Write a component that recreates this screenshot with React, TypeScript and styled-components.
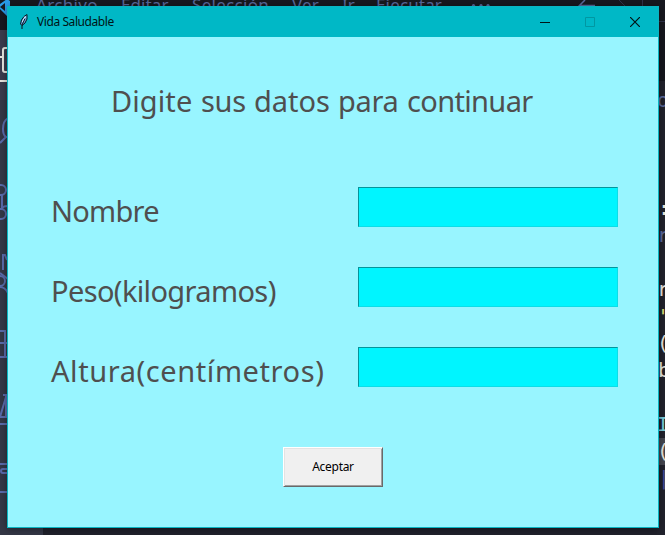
import React from "react";
import styled, { createGlobalStyle } from "styled-components";

const GlobalStyle = createGlobalStyle`
  * { box-sizing: border-box; }
  body { margin: 0; overflow: hidden; background: #20212b; }
`;

const Desktop = styled.main`
  position: relative;
  width: 665px;
  height: 535px;
  overflow: hidden;
  display: grid;
  grid-template: 30px 1fr / 43px 1fr 8px;
  background: #20212b;
  font-family: "Noto Sans", sans-serif;
`;

const MenuBar = styled.header`
  grid-column: 1 / -1;
  display: flex;
  background: #17181f;
  color: #59689b;
  height: 30px;
`;

const MenuItem = styled.span<{ $width: number; $spacing: number }>`
  flex: none;
  width: ${(p) => p.$width}px;
  margin-top: -7px;
  font-size: 17px;
  line-height: 24px;
  letter-spacing: ${(p) => p.$spacing}px;
  white-space: nowrap;
`;

const MenuLogo = styled.svg`
  flex: none;
  width: 12px;
  height: 18px;
  margin-right: 24px;
`;

const NavIcons = styled.svg<{ $width: number }>`
  flex: none;
  width: ${(p) => p.$width}px;
  height: 30px;
`;

const ActivityBar = styled.aside`
  background: #343746;
  svg { display: block; }
`;

const CodeStrip = styled.pre`
  grid-column: 3;
  margin: 0;
  padding-top: 6px;
  border-top: 51px solid #15161d;
  height: 505px;
  background: #21222c;
  font: 20px/27px "DejaVu Sans Mono", monospace;
  color: #e8e8e2;
  overflow: hidden;
`;

const CodeLine = styled.span<{ $color?: string; $indent?: number; $active?: boolean }>`
  display: block;
  height: 27px;
  padding-left: ${(p) => p.$indent ?? 0}px;
  color: ${(p) => p.$color ?? "#e8e8e2"};
  background: ${(p) => (p.$active ? "#44464f" : "transparent")};
`;

const Dialog = styled.section`
  position: absolute;
  left: 7px;
  top: 6px;
  width: 652px;
  height: 522px;
  display: flex;
  flex-direction: column;
  border: 1px solid #0ab4c1;
  background: #98f5ff;
  box-shadow: 0 1px 7px rgba(0, 0, 0, 0.4);
`;

const TitleBar = styled.header`
  flex: none;
  display: flex;
  align-items: center;
  height: 30px;
  padding: 0 1px 0 10px;
  background: #00b8c6;
`;

const WindowTitle = styled.h1`
  flex: 1;
  margin: 0 0 0 7px;
  font: 400 12px/16px "Noto Sans", sans-serif;
  letter-spacing: -0.42px;
  color: #001416;
`;

const CaptionButton = styled.button`
  width: 45px;
  height: 30px;
  padding: 0;
  border: 0;
  background: transparent;
  display: grid;
  place-items: center;

  svg { display: block; }
`;

const Form = styled.form`
  display: flex;
  flex-direction: column;
  height: 490px;
`;

const Heading = styled.h2`
  display: flex;
  margin: 42px 0 0 103px;
  height: 44px;
  font: 400 29px/44px "Noto Sans", sans-serif;
  color: #4f4f4f;
`;

const Word = styled.span<{ $width: number; $spacing: number }>`
  flex: none;
  width: ${(p) => p.$width}px;
  letter-spacing: ${(p) => p.$spacing}px;
  white-space: nowrap;
`;

const Fields = styled.div`
  display: grid;
  gap: 40px;
  margin-top: 64px;
  padding: 0 40px 0 43px;
`;

const Field = styled.label`
  display: grid;
  grid-template-columns: 307px 260px;
  height: 40px;
  font: 400 29px/44px "Noto Sans", sans-serif;
  color: #4f4f4f;
`;

const FieldName = styled.span<{ $spacing: number }>`
  padding-top: 2px;
  letter-spacing: ${(p) => p.$spacing}px;
  white-space: nowrap;
`;

const Input = styled.input`
  width: 260px;
  height: 40px;
  border: 1px solid;
  border-color: #06949b #0ddde6 #0ddde6 #06949b;
  border-radius: 0;
  background: #00f5ff;
  outline: none;
`;

const Submit = styled.button`
  width: 100px;
  height: 40px;
  margin: 60px 0 0 275px;
  padding: 0;
  border: 1px solid;
  border-color: #fff #696969 #696969 #fff;
  box-shadow: inset 1px 1px #e3e3e3, inset -1px -1px #a0a0a0;
  background: #f0f0f0;
  color: #000;
  font: 400 12px/16px "Noto Sans", sans-serif;
  letter-spacing: -0.3px;
`;

const menu: [string, number, number][] = [
  ["Archivo", 85, 0.35],
  ["Editar", 71, 0.1],
  ["Selección", 100, 0.3],
  ["Ver", 50, 0.2],
  ["Ir", 34, 0],
  ["Ejecutar", 94, 0.15],
];

const words: [string, number, number][] = [
  ["Digite", 90, 0.1],
  ["sus", 53, -0.3],
  ["datos", 84, 0],
  ["para", 69, -0.3],
  ["continuar", 126, -0.65],
];

const fields: [string, number][] = [
  ["Nombre", -0.75],
  ["Peso(kilogramos)", -0.63],
  ["Altura(centímetros)", 0.58],
];

const code: { text: string; color?: string; indent?: number; active?: boolean }[] = [
  { text: "ol", color: "#59689b" },
  { text: "" },
  { text: "" },
  { text: "" },
  { text: ":", indent: 1 },
  { text: "r", color: "#59689b" },
  { text: "" },
  { text: "r" },
  { text: "'", color: "#dce07a" },
  { text: "(" },
  { text: "b", indent: 1 },
  { text: "" },
  { text: "I", color: "#78cbdc" },
  { text: "(", active: true },
  { text: "|", color: "#49509c", indent: 1 },
];

function Feather() {
  return (
    <svg width="12" height="18" viewBox="0 0 12 18" fill="none">
      <path d="M9 1.500 6 3.500 3.500 7 2.500 11l1.500 1.500 3-2.500 2-4z" fill="#6ea4e4" stroke="#061a20" />
      <path d="M7.500 3.500 4.500 9" stroke="#d7f2ff" strokeWidth="1.300" />
      <path d="M7 5.500 4 12v4" stroke="#08131b" />
    </svg>
  );
}

function ActivityIcons() {
  return (
    <svg width="43" height="505" viewBox="0 30 43 505" fill="none" stroke="#596aaa" strokeWidth="2">
      <rect y="30" width="43" height="70" fill="#3b3b4d" stroke="none" />
      <path d="M8 48H5q-2 0-2 2v20q0 2 2 2h3M0 57h3M0 81h8" stroke="#e7e5df" />
      <path d="M8 118q-5 3-5 11 0 6 3 8l-6 6M5 137h3" />
      <circle cx="1" cy="190" r="5" />
      <circle cx="1" cy="214" r="5" />
      <path d="M2 195v14M2 209q0-3 6-3M3 270v-15h2l2 5" />
      <circle cx="0" cy="281" r="5" />
      <path d="M0 273l8 6M0 287q5 0 8 6M0 331h5v25M0 343h8M0 357h8M3 395h5M6 395v22M6 397l-6 20M0 417h8M0 424h8M0 464h8M8 469H3q-2 0-2 2t2 2h5M0 492h8" />
    </svg>
  );
}

export default function App() {
  return (
    <>
      <GlobalStyle />
      <Desktop>
        <MenuBar>
          <MenuLogo viewBox="0 0 12 18">
            <path d="M-4 7 7-1l3 2v13l-3 2-10-10z" fill="#299cea" />
            <path d="m0 7 5-4v8z" fill="#17181f" />
          </MenuLogo>
          {menu.map(([label, width, spacing]) => (
            <MenuItem key={label} $width={width} $spacing={spacing}>{label}</MenuItem>
          ))}
          <NavIcons $width={100} viewBox="470 0 100 30" fill="#59689b">
            <circle cx="473.500" cy="5.500" r="1.600" />
            <circle cx="481" cy="5.500" r="1.600" />
            <circle cx="488" cy="5.500" r="1.600" />
          </NavIcons>
          <NavIcons $width={95} viewBox="570 0 95 30" fill="none" stroke="#59689b">
            <path d="m585 0-6 6 6 6M579 5.500h16" strokeWidth="1.500" />
            <path d="m619 0 7 7M642.500 0v21.500H665" stroke="#30334a" />
          </NavIcons>
        </MenuBar>
        <ActivityBar><ActivityIcons /></ActivityBar>
        <CodeStrip>
          {code.map((line, i) => (
            <CodeLine key={i} $color={line.color} $indent={line.indent} $active={line.active}>{line.text}</CodeLine>
          ))}
        </CodeStrip>
        <Dialog>
          <TitleBar>
            <Feather />
            <WindowTitle>Vida Saludable</WindowTitle>
            <CaptionButton type="button" aria-label="Minimizar">
              <svg width="10" height="10"><path d="M0 5.500h10" stroke="#001416" /></svg>
            </CaptionButton>
            <CaptionButton type="button" aria-label="Maximizar" disabled>
              <svg width="10" height="10"><path d="M.5.500h9v9h-9z" fill="none" stroke="#0097a2" /></svg>
            </CaptionButton>
            <CaptionButton type="button" aria-label="Cerrar">
              <svg width="10" height="10"><path d="m0 0 10 10M10 0 0 10" stroke="#001416" strokeWidth="1.200" /></svg>
            </CaptionButton>
          </TitleBar>
          <Form onSubmit={(e) => e.preventDefault()}>
            <Heading>
              {words.map(([text, width, spacing]) => (
                <Word key={text} $width={width} $spacing={spacing}>{text}</Word>
              ))}
            </Heading>
            <Fields>
              {fields.map(([name, spacing]) => (
                <Field key={name}>
                  <FieldName $spacing={spacing}>{name}</FieldName>
                  <Input type="text" />
                </Field>
              ))}
            </Fields>
            <Submit type="submit">Aceptar</Submit>
          </Form>
        </Dialog>
      </Desktop>
    </>
  );
}
